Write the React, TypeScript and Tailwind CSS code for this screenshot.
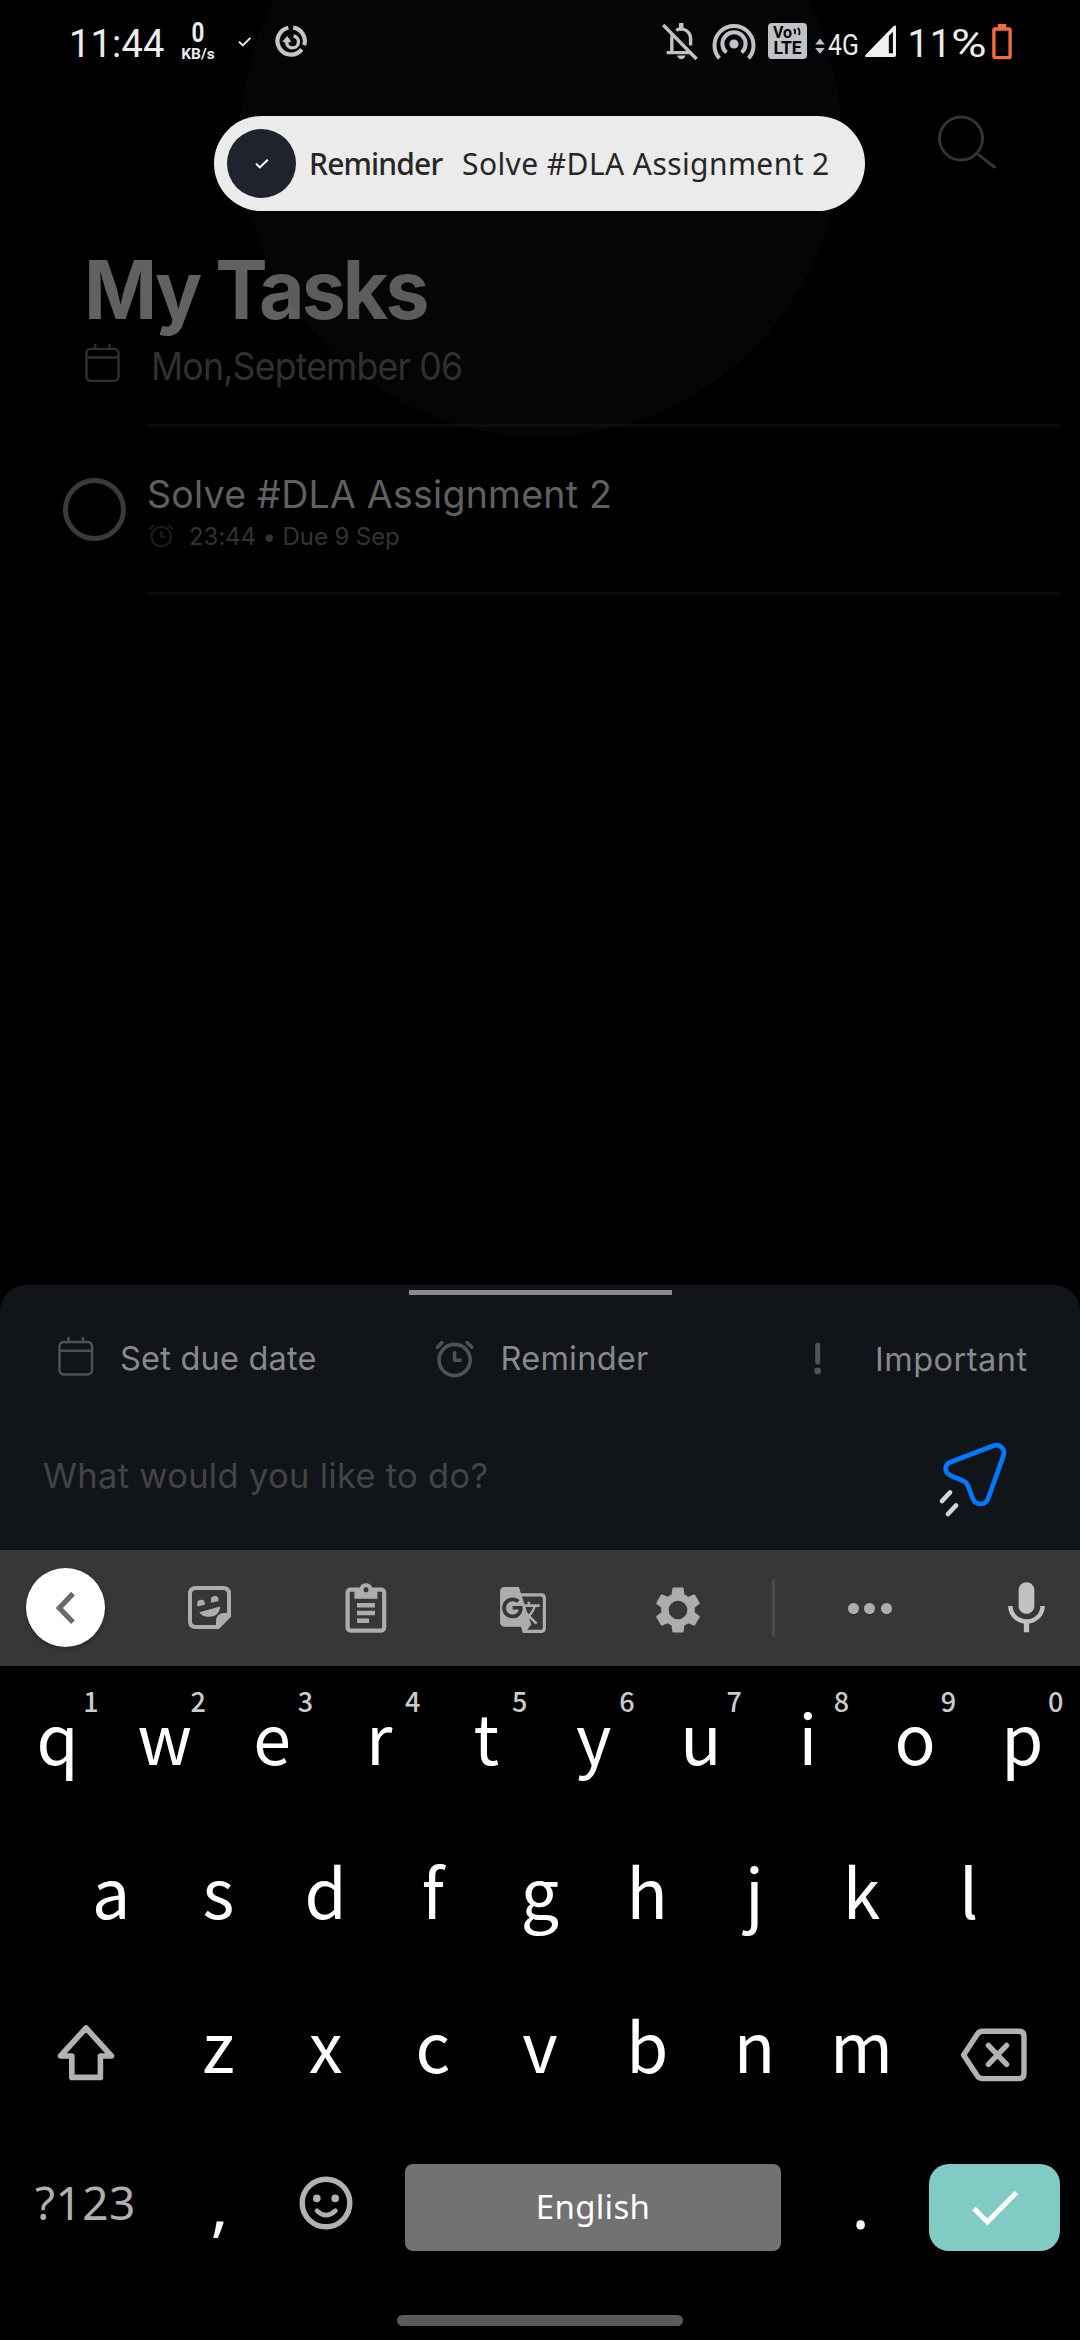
import React from "react";
import { MdGTranslate, MdMic } from "react-icons/md";

function CalendarIcon({ className }: { className: string }) {
  return (
    <svg viewBox="0 0 36 40" fill="none" stroke="currentColor" strokeWidth="2.5" className={className}>
      <rect x="1.5" y="5.7" width="33" height="33" rx="4.5" />
      <path d="M1.5 14.6H34.5M10.5 .8V7M25.2 .8V7" />
    </svg>
  );
}

function AlarmIcon({ className }: { className: string }) {
  return (
    <svg viewBox="0 0 40 38" fill="none" stroke="currentColor" strokeWidth="3.6" strokeLinecap="round" className={className}>
      <circle cx="19.6" cy="20" r="15.6" />
      <path d="M19.6 12.5V20.2H25.3M2.4 7.2L7 2.6M36.8 7.2L32.2 2.6" strokeLinejoin="round" />
    </svg>
  );
}

function StatusBar() {
  return (
    <header className="relative flex h-[88px] shrink-0 items-start font-['Roboto',sans-serif] whitespace-nowrap text-[#ececec]">
      <span className="mt-6 ml-[69px] w-[98px] text-[38px] leading-10 tracking-[0.2px]">11:44</span>
      <div className="mt-[22px] ml-[14px] flex w-[34px] flex-col items-center font-bold">
        <span className="scale-x-[0.8] text-[28px] leading-[22px]">0</span>
        <span className="mt-[2px] text-[15.5px] leading-4">KB/s</span>
      </div>
      <svg viewBox="0 0 14 10" fill="none" stroke="currentColor" strokeWidth="2" className="mt-[37px] ml-[23px] h-[10px] w-[14px]">
        <path d="M1 4.6L4.8 8.4L12.4 .9" />
      </svg>
      <svg viewBox="0 0 34 34" fill="none" stroke="#d6d7d8" strokeWidth="4.2" className="mt-6 ml-[22px] size-[34px]">
        <path d="M19.2 3.7A13.6 13.6 0 0 1 30.2 21.2M27.8 25.4A13.6 13.6 0 1 1 14.4 3.7" />
        <path d="M19.6 12A6 6 0 1 1 12.6 19" strokeWidth="3.4" />
        <path d="M8.4 17.4L13.2 12L17.2 17.4L12.8 19.4Z" fill="#d6d7d8" stroke="none" />
      </svg>

      <svg viewBox="0 0 36 38" fill="none" stroke="#d2d3d5" strokeWidth="3.4" className="mt-[23px] mr-[14px] ml-auto h-[38px] w-[36px]">
        <path d="M1.2 2L34.6 36" />
        <path d="M4.6 29.6H27.5M9.8 29.6V15.5Q9.8 12.5 11 10.4M14.2 7.4Q19 4.4 24 7.4Q28.6 10.4 28.6 15.8V22.6" />
        <path d="M19.2 1.4V5.6" strokeWidth="4.6" strokeLinecap="round" />
        <path d="M15.2 32.4H23.4Q22.4 36.2 19.3 36.2Q16.2 36.2 15.2 32.4Z" fill="#d2d3d5" stroke="none" />
      </svg>
      <svg viewBox="0 0 44 38" fill="none" stroke="#d2d3d5" strokeWidth="4" className="mt-[22px] mr-[12px] h-[38px] w-[44px]">
        <circle cx="22" cy="22" r="4.6" fill="#d2d3d5" stroke="none" />
        <path d="M7.4 36.4A19.5 19.5 0 1 1 36.6 36.4" />
        <path d="M14.4 30.6A11.6 11.6 0 1 1 29.6 30.6" />
      </svg>
      <div className="mt-[23px] flex h-[36px] w-[39px] flex-col items-center rounded-[4px] bg-[#d2d3d5] pt-[3px] font-bold text-black">
        <div className="flex h-[14px] w-[29px] items-start">
          <span className="text-[16px] leading-[14px]">Vo</span>
          <svg viewBox="0 0 9 9" fill="none" stroke="currentColor" strokeWidth="1.8" className="mt-px ml-px size-[9px] shrink-0">
            <path d="M1 2Q3 4 1.6 7M4.8 .8Q7.6 3.8 6 8" />
          </svg>
        </div>
        <span className="text-[17.5px] leading-[16px]">LTE</span>
      </div>
      <svg viewBox="0 0 10 16" fill="#d2d3d5" className="mt-[38px] ml-[8px] h-[16px] w-[10px]">
        <path d="M5 .6L9.8 6.4H.2ZM5 15.8L9.8 10H.2Z" />
      </svg>
      <span className="mt-[30px] ml-[3px] w-[36px] origin-left scale-x-[0.84] text-[29.5px] leading-[30px]">4G</span>
      <svg viewBox="0 0 34 34" className="mt-[24px] mr-[10.5px] h-[34px] w-[33px] shrink-0">
        <path d="M33 2.2V31.6Q33 33.4 31.2 33.4H2.4Q.2 33.2 1.4 31.4L30.8 1.4Q32.8 .2 33 2.2Z" fill="#f0f0f0" />
        <path d="M25.6 11.6L29.8 7.4V29.6H25.6Z" fill="#050608" />
      </svg>
      <span className="mt-6 w-[43px] text-[38px] leading-10 tracking-[0.9px]">11</span>
      <span className="mt-6 mr-[5.5px] w-[36px] origin-left scale-x-[1.28] text-[38px] leading-10">%</span>
      <svg viewBox="0 0 20 36" fill="none" stroke="#f26b3f" strokeWidth="3.4" className="mt-[24px] mr-[68px] h-[36px] w-[20px]">
        <rect x="1.9" y="5" width="16.2" height="28.6" rx="1" />
        <path d="M5.8 2H14.2" strokeWidth="4" />
      </svg>
    </header>
  );
}

function Toast() {
  return (
    <div className="absolute top-[116px] left-[214px] flex h-[95px] w-[651px] items-center rounded-full bg-[#ebebeb] font-['Noto_Sans',sans-serif] text-[30px] leading-10 whitespace-nowrap text-[#262626]">
      <div className="ml-[13px] flex size-[69px] items-center justify-center rounded-full bg-[#1e232d]">
        <svg viewBox="0 0 14 10" fill="none" stroke="#fff" strokeWidth="2" className="h-[10px] w-[14px]">
          <path d="M1 4.6L4.8 8.4L12.8 .7" />
        </svg>
      </div>
      <span className="ml-[13px] w-[152px] font-medium tracking-[-0.83px]">Reminder</span>
      <span className="ml-px tracking-[0.41px]">Solve #DLA Assignment 2</span>
    </div>
  );
}

function Tasks() {
  return (
    <main className="flex flex-1 flex-col font-['Inter',sans-serif] whitespace-nowrap">
      <div className="flex h-[156px] justify-end pt-[26px] pr-[83px]">
        <svg viewBox="0 0 60 56" fill="none" stroke="#333" strokeWidth="3" className="h-[56px] w-[60px]">
          <circle cx="24" cy="24.5" r="21.5" />
          <path d="M39.8 39.4L57.4 53" strokeLinecap="round" />
        </svg>
      </div>
      <h1 className="ml-[84px] h-[90px] origin-left scale-x-[0.97] text-[81px] leading-[93px] font-bold tracking-[-3px] text-[#616161]">
        My Tasks
      </h1>
      <div className="flex h-[90px] items-start pl-[85px]">
        <CalendarIcon className="mt-[8.5px] h-[39.5px] w-[35px] text-[#2f2f2f]" />
        <span className="mt-[13px] ml-[31px] origin-left scale-x-[0.95] text-[37.5px] leading-10 tracking-[-0.85px] text-[#303030]">
          Mon,September 06
        </span>
      </div>
      <div className="ml-[147px] h-[3px] w-[912px] bg-[#0a0b0c]" />
      <div className="flex h-[165px] items-start pl-[63px]">
        <div className="mt-[51px] size-[63px] rounded-full border-[5px] border-[#3a3a3a]" />
        <div className="mt-[46px] ml-[21px] flex flex-col">
          <span className="text-[37.5px] leading-[44px] tracking-[0.26px] text-[#606060]">Solve #DLA Assignment 2</span>
          <div className="mt-[5px] flex items-start">
            <AlarmIcon className="mt-[2px] ml-[2px] h-[24px] w-[25px] text-[#1b1b1b]" />
            <span className="ml-[15px] text-[24px] leading-[30px] tracking-[-0.1px] text-[#333]">23:44 • Due 9 Sep</span>
          </div>
        </div>
      </div>
      <div className="ml-[147px] h-[3px] w-[912px] bg-[#0a0b0c]" />
    </main>
  );
}

function Composer() {
  return (
    <section className="flex h-[265px] shrink-0 flex-col rounded-t-[26px] bg-[#111418] pt-[5px] font-['Inter',sans-serif] whitespace-nowrap">
      <div className="mx-auto h-[5px] w-[263px] bg-[#8a8b8c]" />
      <div className="mt-[40px] flex h-[100px] items-start text-[32.5px] leading-10 text-[#88898b]">
        <CalendarIcon className="ml-[58px] h-[42px] w-[35.5px] text-[#505356]" />
        <span className="mt-[4px] ml-[26.5px] w-[315px] tracking-[0.21px]">Set due date</span>
        <AlarmIcon className="mt-[4.5px] h-[38px] w-[40px] text-[#505356]" />
        <span className="mt-[4px] ml-[25.5px] w-[313px] tracking-[0.25px]">Reminder</span>
        <svg viewBox="0 0 8 34" fill="#505356" className="mt-[6.5px] h-[34px] w-[8px]">
          <rect x="1.2" y=".6" width="5" height="22" rx="2.5" />
          <circle cx="3.7" cy="29" r="3.4" />
        </svg>
        <span className="mt-[5px] ml-[53.5px] tracking-[0.49px]">Important</span>
      </div>
      <div className="flex items-start">
        <span className="mt-[21px] ml-[43px] w-[895px] text-[34.5px] leading-10 tracking-[0.3px] text-[#424446]">
          What would you like to do?
        </span>
        <svg viewBox="0 0 72 78" fill="none" strokeLinecap="round" strokeWidth="4.7" className="mt-[5px] h-[78px] w-[72px]">
          <path
            d="M14 21.5L56 5.5C62 3.5 67.5 9 65.5 15.5L50 59C47.5 65.5 37.5 65.5 35 59L30 46C29 43.5 28 42 25.5 41L13.5 36C5.5 32.5 5.5 24.5 14 21.5Z"
            stroke="#007bff"
          />
          <path d="M12 52.5L4 61M18 65.5L10 74" stroke="#d4d6d8" />
        </svg>
      </div>
    </section>
  );
}

function Toolbar() {
  return (
    <div className="flex h-[116px] shrink-0 items-start bg-[#373737] text-[#adadad]">
      <div className="mt-[18px] ml-[26px] flex size-[79px] items-center justify-center rounded-full bg-white shadow-[0_2px_4px_rgba(0,0,0,0.3)]">
        <svg viewBox="0 0 20 34" fill="none" stroke="#6b6b6b" strokeWidth="5.2" className="h-[34px] w-[20px]">
          <path d="M17 2.6L3.4 17L17 31.2" />
        </svg>
      </div>
      <svg viewBox="0 0 43 43" fill="none" className="mt-[36px] ml-[83px] size-[43px]">
        <path d="M30 41H8Q2 41 2 35V8Q2 2 8 2H35Q41 2 41 8V30Z" stroke="currentColor" strokeWidth="4" />
        <path d="M30.5 43L43 30.5L42 27H35Q28 28 28 35V43Z" fill="currentColor" />
        <path d="M9.3 20.6V18A3.8 3.8 0 0 1 16.9 17.2V18.7ZM23 16.8V14.2A3.8 3.8 0 0 1 30.6 13.4V14.9Z" fill="currentColor" />
        <path d="M11.4 26.2L32 20.4C32 26 28 30.4 21.8 30.8C17 31 13 29.6 11.4 26.2Z" fill="currentColor" />
      </svg>
      <svg viewBox="0 0 42 52" fill="none" className="mt-[32px] ml-[114px] h-[52px] w-[42px]">
        <rect x="2.6" y="7.6" width="36.6" height="41" rx="3" stroke="currentColor" strokeWidth="4.2" />
        <path
          fillRule="evenodd"
          d="M9.4 6H14.7A6.6 6.6 0 0 1 27.3 6H32.4V16.7H9.4ZM21 5.3A2.5 2.5 0 1 0 21 10.3A2.5 2.5 0 1 0 21 5.3Z"
          fill="currentColor"
        />
        <circle cx="21" cy="7.8" r="2.5" fill="#373737" />
        <path d="M12 23.3H30M12 31H30M12 38.8H24" stroke="currentColor" strokeWidth="4.4" />
      </svg>
      <MdGTranslate className="mt-[34.5px] ml-[111px] size-[50px]" />
      <svg viewBox="0 0 24 24" fill="currentColor" fillRule="evenodd" className="mt-[31.5px] ml-[102px] size-[56px]">
        <path d="M19.14 12.94c.04-.3.06-.61.06-.94 0-.32-.02-.64-.07-.94l2.03-1.58c.18-.14.23-.41.12-.61l-1.92-3.32c-.12-.22-.37-.29-.59-.22l-2.39.96c-.5-.38-1.03-.7-1.62-.94l-.36-2.54c-.04-.24-.24-.41-.48-.41h-3.84c-.24 0-.43.17-.47.41l-.36 2.54c-.59.24-1.13.57-1.62.94l-2.39-.96c-.22-.08-.47 0-.59.22l-1.91 3.32c-.12.21-.08.47.12.61l2.03 1.58c-.05.3-.09.63-.09.94s.02.64.07.94l-2.03 1.58c-.18.14-.23.41-.12.61l1.92 3.32c.12.22.37.29.59.22l2.39-.96c.5.38 1.03.7 1.62.94l.36 2.54c.05.24.24.41.48.41h3.84c.24 0 .44-.17.47-.41l.36-2.54c.59-.24 1.13-.56 1.62-.94l2.39.96c.22.08.47 0 .59-.22l1.92-3.32c.12-.22.07-.47-.12-.61zM12 8A4 4 0 0 0 12 16A4 4 0 0 0 12 8Z" />
      </svg>
      <div className="mt-[29px] ml-[66px] h-[58px] w-[3px] bg-[#4a4a4a]" />
      <div className="mt-[52.5px] ml-[72.5px] flex gap-[5.5px]">
        <div className="size-[11px] rounded-full bg-current" />
        <div className="size-[11px] rounded-full bg-current" />
        <div className="size-[11px] rounded-full bg-current" />
      </div>
      <MdMic className="mt-[26.7px] ml-[103.5px] size-[63px] text-[#c2c2c2]" />
    </div>
  );
}

function Key({ letter, hint }: { letter: string; hint?: string }) {
  return (
    <div className="relative flex h-[154px] w-[107.2px] shrink-0 justify-center leading-[139px]">
      {letter}
      {hint && (
        <span className="absolute top-[19px] left-[74px] w-[26px] text-center text-[27px] leading-8 font-medium text-[#cacaca]">
          {hint}
        </span>
      )}
    </div>
  );
}

function Keyboard() {
  return (
    <div className="flex h-[674px] shrink-0 flex-col whitespace-nowrap text-white">
      <div className="flex flex-col font-['Noto_Sans_CJK_SC',sans-serif] text-[68px]">
        <div className="flex justify-center">
          {"qwertyuiop".split("").map((k, i) => (
            <Key key={k} letter={k} hint={String((i + 1) % 10)} />
          ))}
        </div>
        <div className="flex justify-center">
          {"asdfghjkl".split("").map((k) => (
            <Key key={k} letter={k} />
          ))}
        </div>
        <div className="flex items-start justify-center">
          <div className="flex w-[164px] pl-[55px]">
            <svg viewBox="0 0 60 58" fill="none" stroke="#b2b2b2" strokeWidth="5.6" strokeLinejoin="round" className="mt-[48.5px] h-[58px] w-[60px]">
              <path d="M30 5L4.5 33H15.8V54.4H44.4V33H55.5Z" />
            </svg>
          </div>
          {"zxcvbnm".split("").map((k) => (
            <Key key={k} letter={k} />
          ))}
          <div className="flex w-[164px] justify-end pr-[51px]">
            <svg viewBox="0 0 68 54" fill="none" stroke="#b2b2b2" strokeWidth="5.4" strokeLinejoin="round" strokeLinecap="round" className="mt-[54px] h-[54px] w-[68px]">
              <path d="M3.6 27L17.4 6Q19.2 3.2 22.5 3.2H59Q64 3.2 64 8.2V45.6Q64 50.6 59 50.6H22.5Q19.2 50.6 17.4 48Z" />
              <path d="M28.4 17.4L46.6 36.4M46.6 17.4L28.4 36.4" />
            </svg>
          </div>
        </div>
      </div>
      <div className="flex h-[154px] items-start font-['Noto_Sans',sans-serif]">
        <span className="mt-[48px] ml-[35px] w-[131px] text-[46px] leading-[52px] tracking-[0.47px] text-[#b0b0b0]">?123</span>
        <span className="w-[107px] text-center text-[68px] leading-[149px]">,</span>
        <svg viewBox="0 0 54 54" fill="none" stroke="#b2b2b2" strokeWidth="5.4" strokeLinecap="round" className="mt-[47.5px] ml-[25.5px] size-[54px]">
          <circle cx="27" cy="27" r="23.8" />
          <path d="M18 34.8Q27 43.4 36.4 34.8" strokeWidth="4.6" />
          <circle cx="17.8" cy="22.4" r="3.8" fill="#b2b2b2" stroke="none" />
          <circle cx="36.2" cy="22.4" r="3.8" fill="#b2b2b2" stroke="none" />
        </svg>
        <div className="mt-[36px] ml-[52.5px] flex h-[87px] w-[376px] justify-center rounded-[8px] bg-[#727272] text-[33px] leading-[86px] tracking-[0.3px]">
          English
        </div>
        <span className="ml-[26px] w-[107px] text-center text-[68px] leading-[149px]">.</span>
        <div className="mt-[36px] ml-[15px] flex h-[87px] w-[131px] items-center justify-center rounded-[20px] bg-[#80cbc4]">
          <svg viewBox="0 0 48 36" fill="none" stroke="#fff" strokeWidth="5" className="h-[36px] w-[48px]">
            <path d="M3 18.6L16.4 32L45.4 2.4" />
          </svg>
        </div>
      </div>
      <div className="mx-auto mt-[33px] h-[11px] w-[286px] rounded-full bg-[#5a5a5a]" />
    </div>
  );
}

export default function App() {
  return (
    <div className="relative flex h-[2340px] w-[1080px] flex-col overflow-hidden bg-black">
      <StatusBar />
      <Tasks />
      <Composer />
      <Toolbar />
      <Keyboard />
      <div className="pointer-events-none absolute top-[-163px] left-[241px] size-[600px] rounded-full bg-[#283246]/10" />
      <Toast />
    </div>
  );
}
